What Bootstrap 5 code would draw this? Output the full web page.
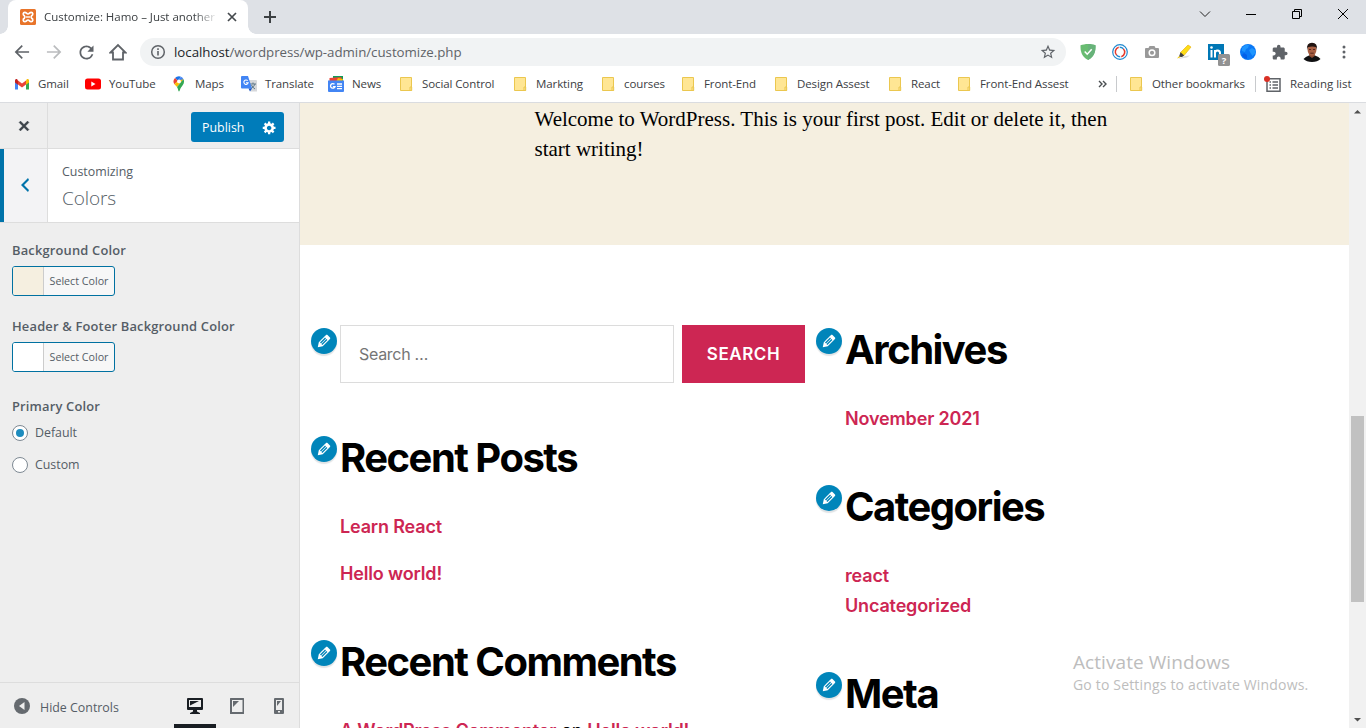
<!DOCTYPE html>
<html lang="en">
<head>
<meta charset="utf-8">
<title>Customize: Hamo – Just another WordPress site</title>
<link rel="stylesheet" href="https://cdn.jsdelivr.net/npm/bootstrap@5.3.0/dist/css/bootstrap.min.css">
<script src="https://cdn.jsdelivr.net/npm/bootstrap@5.3.0/dist/js/bootstrap.bundle.min.js"></script>
<style>
body{height:728px;font-family:"Open Sans",sans-serif;font-size:11.5px;line-height:16px;color:#3c4043;letter-spacing:-.1px}
svg{display:block;flex:none}
.tabstrip{height:34px;background:#dee1e6}
.tab{width:240px;height:34px;margin-left:8px;padding:0 10px 0 12px;border-radius:8px 8px 0 0;background:#fff}
.tab::before,.tab::after{content:"";position:absolute;bottom:0;width:8px;height:8px}
.tab::before{left:-8px;background:radial-gradient(circle at 0 0,#dee1e6 7.5px,#fff 8px)}
.tab::after{right:-8px;background:radial-gradient(circle at 100% 0,#dee1e6 7.5px,#fff 8px)}
.tabtitle{width:172px;margin-left:8px;letter-spacing:-.03px;-webkit-mask-image:linear-gradient(90deg,#000 150px,transparent 174px)}
.winbtn{width:46px;height:28px}
.toolbar{height:36px;padding:0 6px}
.cell{width:32px;height:28px;color:#5f6368}
.omni{height:28px;margin:0 6px;padding:0 10px;border-radius:14px;background:#f1f3f4;color:#5f6368;font-size:13.3px;letter-spacing:-.03px}
.bookmarks{height:33px;border-bottom:1px solid #dadce0;padding-left:14px;padding-bottom:4px}
.marks{display:grid;grid-template-columns:71px 86px 70px 87px 70px 114px 88px 80px 93px 114px 69px 134px}
.bm{display:flex;align-items:center;gap:8px}
.vr1{width:1px;height:16px;background:#c8cacd}
.side{width:300px;background:#eee;border-right:1px solid #ddd;color:#555d66;font-size:12.4px;letter-spacing:0}
.sidehead{height:46px;border-bottom:1px solid #ddd}
.sidecol{width:48px;border-right:1px solid #ddd}
.publish{width:93px;height:30px;margin:9px 15px 0 auto;padding:1px 7px 0 11px;background:#007cba;border-radius:3px;color:#fff}
.crumb{height:74px;background:#fff;border-bottom:1px solid #ddd}
.crumbtext{padding:15px 0 0 14px}
.backbtn{background:#f3f3f5;border-left:4px solid #0073aa;color:#0073aa}
.panelname{font-size:19px;line-height:26px;font-weight:300;margin-top:5px;letter-spacing:-.1px}
.ctl{font-weight:600;font-size:12.9px;line-height:20px;letter-spacing:.18px}
.controls{padding:17px 12px 0}
.swatch{width:103px;height:30px;margin:6px 0 20px;border:1px solid #0071a1;border-radius:3px;background:#f7f7f7;font-size:10.7px;overflow:hidden}
.chip{width:31px;border-right:1px solid #ccc}
.radio1{width:16px;height:16px;border:1px solid #7e8993;border-radius:50%;background:#fff;margin-right:7px}
.radio1.on::before{content:"";width:8px;height:8px;border-radius:50%;background:#1e8cbe}
.choice{height:16px;margin:9px 0 16px;letter-spacing:-.02px}
.sidefoot{height:46px;border-top:1px solid #ddd}
.device{width:42px;height:45px;color:#656a6f}
.device.on{border-bottom:4px solid #191e23;padding-top:4px;color:#191e23}
.site{font-family:Inter,sans-serif;background:#fff;color:#000;font-size:18px;line-height:30px;letter-spacing:-.16px}
.post{height:142px;background:#f5efe0;font-family:"Liberation Serif",serif;font-size:21px;line-height:30px;letter-spacing:0;padding:1px 0 0 234.5px}
.widgets{padding:80px 0 0 40px}
.wcol{width:465px;flex:none}
.wcol+.wcol{margin-left:40px;padding-top:1px}
.widget{position:relative;margin-bottom:49px}
.widget.finder{margin-bottom:51px}
.site h2{font-weight:700;font-size:40px;line-height:48px;letter-spacing:-1.52px;margin:0 0 30px}
.site a{color:#cd2653;font-weight:600;text-decoration:none}
.pen{position:absolute;left:-29px;top:2px;width:26px;height:26px;border-radius:50%;background:#0085ba;box-shadow:0 2px 1px rgba(46,68,83,.15);padding:4px}
.finder .pen{top:3px}
.field{width:334px;height:58px;border:1px solid #dcdcdc;padding-left:18px;color:#757575;font-size:16px;letter-spacing:-.3px}
.go{width:123px;height:58px;background:#cd2653;color:#fff;font-weight:600;font-size:17px;letter-spacing:.55px}
.gap17{margin-top:17px}
.scroll1{width:17px;background:#f1f1f1}
.thumb{position:absolute;left:2px;top:313px;width:13px;height:186px;background:#c1c1c1}
.activate{position:absolute;left:773px;top:547px;font-family:"Open Sans",sans-serif;color:#bdbdbd;font-size:14px;line-height:20px;letter-spacing:.17px}
.activate div{font-size:19px;line-height:25px;letter-spacing:.07px}
</style>
</head>
<body class="d-flex flex-column overflow-hidden">
<svg width="0" height="0" class="position-absolute">
 <symbol id="folder" viewBox="0 0 16 16"><path d="M2.500 1.500h11v13h-11z" fill="#ffe694" stroke="#ebc74f"/><path d="M12 14.500v-3.500h1.700v3.500z" fill="#ffe694" stroke="#ebc74f"/></symbol>
 <symbol id="pencil" viewBox="0 0 20 20"><path fill="#fff" d="M13.890 3.390l2.710 2.720c.46.46.42 1.240.03 1.640l-8.010 8.020-5.560 1.160 1.160-5.580s7.600-7.630 7.990-8.030c.39-.39 1.220-.39 1.680.07zm-2.730 2.790l-5.590 5.610 1.110 1.110 5.540-5.650zm-2.970 8.230l5.580-5.600-1.070-1.080-5.590 5.600z"/></symbol>
</svg>

<header class="flex-shrink-0">
 <div class="tabstrip d-flex">
  <div class="tab d-flex align-items-center position-relative">
   <svg width="16" height="16" viewBox="0 0 16 16"><rect width="16" height="16" rx="1.500" fill="#e8742a"/><path d="M4.800 3.300C3 3.300 2.600 6 4.300 6.700Q5.500 8 4.300 9.300C2.600 10 3 12.700 4.800 12.700 6.500 12.700 6.500 11 8 11s1.500 1.700 3.200 1.700c1.800 0 2.200-2.700.5-3.400Q10.500 8 11.700 6.700c1.700-.7 1.300-3.400-.5-3.400C9.500 3.300 9.500 5 8 5S6.500 3.300 4.800 3.300z" fill="none" stroke="#fff" stroke-width="1.700"/><path d="M6 8h4" stroke="#fff" stroke-width="1.400"/></svg>
   <span class="tabtitle text-nowrap">Customize: Hamo – Just another</span>
   <svg class="ms-auto" width="12" height="12" viewBox="0 0 12 12"><path d="M2 2l8 8M10 2l-8 8" stroke="#45494d" stroke-width="1.700"/></svg>
  </div>
  <svg class="align-self-center ms-3" width="12" height="12" viewBox="0 0 12 12"><path d="M6 0v12M0 6h12" stroke="#3c4043" stroke-width="2"/></svg>
  <div class="ms-auto d-flex text-black">
   <div class="winbtn d-flex align-items-center justify-content-center"><svg width="12" height="12" viewBox="0 0 12 12"><path d="M1 3.500l5 5 5-5" fill="none" stroke="#222"/></svg></div>
   <div class="winbtn d-flex align-items-center justify-content-center"><svg width="10" height="12" viewBox="0 0 10 12"><path d="M0 6.500h10" stroke="#000"/></svg></div>
   <div class="winbtn d-flex align-items-center justify-content-center"><svg width="10" height="10" viewBox="0 0 10 10"><path d="M.5 2.500h7v7h-7zM2.500 2.500v-2h7v7h-2" fill="none" stroke="#000"/></svg></div>
   <div class="winbtn d-flex align-items-center justify-content-center"><svg width="10" height="10" viewBox="0 0 10 10"><path d="M0 0l10 10M10 0L0 10" stroke="#000"/></svg></div>
  </div>
 </div>

 <div class="toolbar d-flex align-items-center">
  <div class="cell d-flex align-items-center justify-content-center"><svg width="20" height="20" viewBox="0 0 24 24" fill="currentColor"><path d="M20.500 11H7l6-6-1.400-1.400L3.200 12l8.400 8.400L13 19l-6-6h13.500z"/></svg></div>
  <div class="cell d-flex align-items-center justify-content-center"><svg width="20" height="20" viewBox="0 0 24 24" fill="#babcbe"><path d="M3.500 11H17l-6-6 1.400-1.400 8.400 8.400-8.400 8.400L11 19l6-6H3.500z"/></svg></div>
  <div class="cell d-flex align-items-center justify-content-center"><svg width="21" height="21" viewBox="0 0 24 24" fill="currentColor"><path d="M17.650 6.350A7.958 7.958 0 0 0 12 4c-4.420 0-7.990 3.580-7.990 8s3.570 8 7.990 8c3.730 0 6.840-2.550 7.730-6h-2.080A5.990 5.990 0 0 1 12 18c-3.310 0-6-2.690-6-6s2.690-6 6-6c1.660 0 3.140.69 4.220 1.780L13 11h7V4z"/></svg></div>
  <div class="cell d-flex align-items-center justify-content-center"><svg width="18" height="18" viewBox="0 0 18 18"><path d="M1.500 9.500L9 2l7.500 7.500H14v7H4v-7z" fill="none" stroke="currentColor" stroke-width="1.800"/></svg></div>
  <div class="omni d-flex align-items-center flex-grow-1">
   <svg width="16" height="16" viewBox="0 0 16 16"><circle cx="8" cy="8" r="6.300" fill="none" stroke="#5f6368" stroke-width="1.500"/><path d="M8 7v4.500M8 4.300v1.700" stroke="#5f6368" stroke-width="1.600"/></svg>
   <span class="ms-2"><span class="text-dark">localhost</span>/wordpress/wp-admin/customize.php</span>
   <svg class="ms-auto" width="16" height="16" viewBox="1 1 22 22" fill="#5f6368"><path d="M22 9.240l-7.190-.62L12 2 9.190 8.630 2 9.240l5.460 4.730L5.820 21 12 17.270 18.180 21l-1.630-7.030L22 9.240zM12 15.400l-3.760 2.270 1-4.280-3.320-2.880 4.380-.38L12 6.100l1.710 4.040 4.380.38-3.320 2.880 1 4.280L12 15.400z"/></svg>
  </div>
  <div class="cell d-flex align-items-center justify-content-center"><svg width="16" height="16" viewBox="0 0 16 16"><path d="M8 0c2.700 0 5.400.6 7.500 1.300 0 5-.2 11-7.500 14.700C.7 12.300.5 6.300.5 1.300 2.600.6 5.300 0 8 0z" fill="#68bc71"/><path d="M8 0c2.700 0 5.400.6 7.500 1.300 0 5-.2 11-7.500 14.700z" fill="#67b279"/><path d="M4.700 7.500l2.500 2.700 4.500-5" fill="none" stroke="#fff" stroke-width="1.500"/></svg></div>
  <div class="cell d-flex align-items-center justify-content-center"><svg width="16" height="16" viewBox="0 0 16 16"><circle cx="8" cy="8" r="7.300" fill="#fff" stroke="#2289cf" stroke-width="1.200"/><path d="M6.700 3.300a4.800 4.800 0 0 0-2 8" fill="none" stroke="#e5392b" stroke-width="1.500"/><path d="M9.300 12.700a4.800 4.800 0 0 0 2-8" fill="none" stroke="#e5392b" stroke-width="1.500"/><path d="M7.700 3.200a4.800 4.800 0 0 1 3.600 1.500M8.200 12.800a4.800 4.800 0 0 1-3.500-1.500" fill="none" stroke="#2289cf" stroke-width="1.500"/></svg></div>
  <div class="cell d-flex align-items-center justify-content-center"><svg width="16" height="16" viewBox="0 0 16 16"><path d="M2 4h2.500L5.500 2h5l1 2H14q1 0 1 1v8q0 1-1 1H2q-1 0-1-1V5q0-1 1-1z" fill="#999"/><circle cx="8" cy="8.800" r="2.800" fill="none" stroke="#fff" stroke-width="1.500"/></svg></div>
  <div class="cell d-flex align-items-center justify-content-center"><svg width="16" height="16" viewBox="0 0 16 16"><path d="M2 15l9-1.500 3-2-5 .5-5 2z" fill="#ddd"/><path d="M12 1l3 2-7 8.500-3.500-3z" fill="#fddd16" stroke="#ebb517" stroke-width=".7"/><path d="M4.500 8.200l3.700 3.200L6 13l-3-.3z" fill="#42413d"/><path d="M3 12.300l1.500 1L1 14.600z" fill="#f5c800"/></svg></div>
  <div class="cell position-relative"><svg class="position-absolute" style="left:8px;top:6px" width="22" height="22" viewBox="0 0 22 22"><rect width="16" height="16" fill="#0077b5"/><path d="M3.500 6v7.500M7 6v7.500M7 9q0-2.500 2.500-2.500t2.500 2.500v4" fill="none" stroke="#fff" stroke-width="2"/><circle cx="3.500" cy="3.500" r="1.300" fill="#fff"/><rect x="10" y="10" width="12" height="12" rx="1.500" fill="#929292"/><text x="16" y="19.500" text-anchor="middle" font-family="Open Sans" font-size="9.500" font-weight="700" fill="#fff">?</text></svg></div>
  <div class="cell d-flex align-items-center justify-content-center"><svg width="16" height="16" viewBox="0 0 16 16"><circle cx="8" cy="8" r="8" fill="#0a78f5"/><path d="M2 4q3-4 7-3l-1 3-2 1-1 3-3-1zM9 6l3-2 3 2 .500 3-3 3-2-3z" fill="#1f96ff"/><path d="M4 9l3 2v4q-4-1-5-4z" fill="#0560e8"/></svg></div>
  <div class="cell d-flex align-items-center justify-content-center"><svg width="17" height="17" viewBox="1 0 24 24" fill="currentColor"><path d="M20.500 11H19V7c0-1.100-.9-2-2-2h-4V3.500a2.500 2.500 0 0 0-5 0V5H4c-1.100 0-1.990.9-1.990 2v3.800H3.500c1.490 0 2.700 1.210 2.700 2.700s-1.210 2.700-2.700 2.700H2V20c0 1.100.9 2 2 2h3.800v-1.500c0-1.490 1.210-2.700 2.700-2.700s2.700 1.210 2.700 2.700V22H17c1.100 0 2-.9 2-2v-4h1.500a2.500 2.500 0 0 0 0-5z"/></svg></div>
  <div class="cell d-flex align-items-center justify-content-center"><svg width="20" height="20" viewBox="0 0 20 20"><path d="M1.500 17q2-2.500 5.500-3.500h6q4 1 5.500 3.500-3 3-8.500 3t-8.500-3z" fill="#101012"/><path d="M7.200 11h5.600v3l-2.800 2-2.800-2z" fill="#8d4c33"/><ellipse cx="10" cy="7.800" rx="4.400" ry="6" fill="#a86044"/><path d="M5 8Q4.300.800 10 .8T15 8l-.8-2.700q-4-1.700-8.400 0z" fill="#201411"/><path d="M7 7.500h2M11 7.500h2M8.300 11.200h3.400" stroke="#56261c"/></svg></div>
  <div class="cell d-flex align-items-center justify-content-center"><svg width="4" height="14" viewBox="0 0 4 14" fill="currentColor"><circle cx="2" cy="2" r="1.500"/><circle cx="2" cy="7" r="1.500"/><circle cx="2" cy="12" r="1.500"/></svg></div>
 </div>

 <nav class="bookmarks d-flex align-items-center text-nowrap">
  <div class="marks">
   <div class="bm"><svg width="16" height="16" viewBox="0 0 16 16"><path d="M1 3.500v10h3V7z" fill="#4285f4"/><path d="M15 3.500v10h-3V7z" fill="#34a853"/><path d="M4 4.500v4l4 3 4-3v-4l-4 3z" fill="#ea4335"/><path d="M1 4.500v2l3 2.200V4.500L3 3Q1 2.500 1 4.500z" fill="#c5221f"/><path d="M15 4.500v2l-3 2.200V4.500l1-1.500q2-.5 2 1.500z" fill="#fbbc04"/></svg>Gmail</div>
   <div class="bm"><svg width="16" height="16" viewBox="0 0 16 16"><rect y="2.500" width="16" height="11" rx="2.500" fill="#f00"/><path d="M6.300 5.600v4.800l4.200-2.400z" fill="#fff"/></svg>YouTube</div>
   <div class="bm"><svg width="16" height="16" viewBox="0 0 16 16"><path d="M8 .3a5.200 5.200 0 0 0-4 1.800l3 2.600L10 .8A5 5 0 0 0 8 .3z" fill="#1a73e8"/><path d="M4 2.100a5 5 0 0 0-.6 6.200L7 4.700z" fill="#ea4335"/><path d="M10 .8L6.300 5 9 7.500l3.500-4.200A5 5 0 0 0 10 .8z" fill="#4285f4"/><path d="M12.500 3.300L6 11Q4.500 9.500 3.400 8.300L7 4.500z" fill="#fbbc04"/><path d="M12.500 3.300q1.500 3-1 6.200Q9.300 12 8.700 14.500 8 16.500 7.300 14.500 7 12.500 6 11z" fill="#34a853"/><circle cx="8" cy="5.400" r="1.900" fill="#fff"/></svg>Maps</div>
   <div class="bm"><svg width="16" height="16" viewBox="0 0 16 16"><path d="M7 4h8q1 0 1 1v10.500H9.500z" fill="#d6d8db"/><path d="M9 8h6M12 6.500V8M14 8q-1 3-4 4.500M10.500 9q1 2.500 3.500 4" stroke="#607988" fill="none"/><path d="M1 0h6l4 12.500H1q-1 0-1-1V1q0-1 1-1z" fill="#4285f4"/><path d="M7.500 12.500H11l-2 3z" fill="#1a56c4"/><path d="M6.700 4.700A2.200 2.200 0 1 0 7.200 6.700H5" fill="none" stroke="#fff" stroke-width="1.100"/></svg>Translate</div>
   <div class="bm"><svg width="16" height="16" viewBox="0 0 16 16"><path d="M5 0h10v5H5z" fill="#0c9d58"/><path d="M1.500 2l12-1v5h-12z" fill="#ea4335"/><path d="M10 2l5 1-1 4-6-1z" fill="#fbbc04"/><path d="M0 4.500h16V15q0 1-1 1H1q-1 0-1-1z" fill="#4285f4"/><path d="M6.500 8.300A2.300 2.300 0 1 0 7 10.700H4.900M9 8h5M9 10.300h5M9 12.600h5" fill="none" stroke="#fff" stroke-width="1.300"/></svg>News</div>
   <div class="bm"><svg width="16" height="16"><use href="#folder"/></svg>Social Control</div>
   <div class="bm"><svg width="16" height="16"><use href="#folder"/></svg>Markting</div>
   <div class="bm"><svg width="16" height="16"><use href="#folder"/></svg>courses</div>
   <div class="bm"><svg width="16" height="16"><use href="#folder"/></svg>Front-End</div>
   <div class="bm"><svg width="16" height="16"><use href="#folder"/></svg>Design Assest</div>
   <div class="bm"><svg width="16" height="16"><use href="#folder"/></svg>React</div>
   <div class="bm"><svg width="16" height="16"><use href="#folder"/></svg>Front-End Assest</div>
  </div>
  <svg class="ms-2" width="10" height="8" viewBox="0 0 10 8"><path d="M1 1l3 3-3 3M5 1l3 3-3 3" fill="none" stroke="#4a4e51" stroke-width="1.400"/></svg>
  <span class="vr1 ms-2 me-2"></span>
  <div class="bm" style="width:130px"><svg style="margin-left:3px" width="16" height="16"><use href="#folder"/></svg>Other bookmarks</div>
  <span class="vr1"></span>
  <div class="bm ms-2" style="letter-spacing:0"><svg width="18" height="16" viewBox="0 0 18 16"><path d="M3 2.800h13v12.500H3z" fill="none" stroke="#5f6368" stroke-width="1.500"/><path d="M5.500 6h1.500M8.500 6h5.500M5.500 9h1.500M8.500 9h5.500M5.500 12h1.500M8.500 12h5.500" stroke="#5f6368" stroke-width="1.400"/><circle cx="3" cy="3" r="3" fill="#d93025"/></svg>Reading list</div>
 </nav>
</header>

<main class="d-flex flex-grow-1 overflow-hidden">
 <aside class="side d-flex flex-column flex-shrink-0">
  <div class="sidehead d-flex flex-shrink-0">
   <div class="sidecol d-flex align-items-center justify-content-center"><svg width="20" height="20" viewBox="0 0 20 20"><path fill="#3c434a" stroke="#3c434a" stroke-width=".4" d="M14.950 6.460L11.410 10l3.540 3.540-1.410 1.410L10 11.420l-3.530 3.530-1.420-1.420L8.580 10 5.050 6.470l1.420-1.420L10 8.580l3.540-3.530z"/></svg></div>
   <div class="publish d-flex align-items-center">
    <span>Publish</span>
    <svg class="ms-auto" width="15" height="15" viewBox="0 0 20 20"><path fill="#fff" d="M18 12h-2.180c-.17.7-.44 1.350-.81 1.930l1.540 1.540-2.100 2.100-1.540-1.540c-.58.36-1.230.63-1.910.79V19H8v-2.180c-.68-.16-1.330-.43-1.910-.79l-1.540 1.540-2.120-2.120 1.540-1.540c-.36-.58-.63-1.230-.79-1.910H1V9.030h2.170c.16-.7.44-1.350.8-1.940L2.430 5.550l2.100-2.100 1.540 1.540c.58-.37 1.240-.64 1.930-.81V2h3v2.180c.68.16 1.330.43 1.910.79l1.540-1.540 2.120 2.120-1.540 1.540c.36.59.64 1.240.8 1.940H18V12zm-8.500 1.500c1.660 0 3-1.340 3-3s-1.340-3-3-3-3 1.340-3 3 1.340 3 3 3z"/></svg>
   </div>
  </div>
  <div class="crumb d-flex flex-shrink-0">
   <div class="sidecol backbtn d-flex align-items-center justify-content-center pe-1"><svg width="20" height="20" viewBox="-1 1 20 20" fill="currentColor"><path d="M14 5l-5 5 5 5-1 2-7-7 7-7z"/></svg></div>
   <div class="crumbtext"><div>Customizing</div><div class="panelname">Colors</div></div>
  </div>
  <div class="flex-grow-1 controls">
   <div class="ctl">Background Color</div>
   <div class="swatch d-flex align-items-stretch"><span class="chip" style="background:#f5efe0"></span><span class="m-auto">Select Color</span></div>
   <div class="ctl">Header &amp; Footer Background Color</div>
   <div class="swatch d-flex align-items-stretch mb-4"><span class="chip bg-white"></span><span class="m-auto">Select Color</span></div>
   <div class="ctl">Primary Color</div>
   <div class="choice d-flex align-items-center"><span class="radio1 on d-flex align-items-center justify-content-center"></span>Default</div>
   <div class="choice d-flex align-items-center"><span class="radio1"></span>Custom</div>
  </div>
  <div class="sidefoot d-flex flex-shrink-0 align-items-center">
   <svg class="ms-2 ps-1" width="24" height="18" viewBox="0 0 18 18"><circle cx="9" cy="9" r="8" fill="#656a6f"/><path d="M11.500 5v8L6 9z" fill="#eee"/></svg>
   <span class="ms-2 pt-1">Hide Controls</span>
   <div class="ms-auto d-flex" style="margin-right:-1px">
    <div class="device on d-flex align-items-center justify-content-center"><svg width="16" height="16" viewBox="0 0 16 16" fill="currentColor"><path fill-rule="evenodd" d="M1 0h14q1 0 1 1v10q0 1-1 1h-5v1.500l3 1.500v1H3v-1l3-1.500V12H1q-1 0-1-1V1q0-1 1-1zm1 2v7h12V2z"/><path d="M3 3h9L3 7.500z"/></svg></div>
    <div class="device d-flex align-items-center justify-content-center"><svg width="16" height="16" viewBox="0 0 16 16" fill="currentColor"><path fill-rule="evenodd" d="M1.500 0h13q.5 0 .5.500v15q0 .5-.5.500h-13q-.5 0-.5-.5V.5q0-.5.5-.5zM3 2v12h10.500V2z"/><path d="M4 3h6L4 9z"/></svg></div>
    <div class="device d-flex align-items-center justify-content-center"><svg width="10" height="16" viewBox="0 0 10 16" fill="currentColor"><path fill-rule="evenodd" d="M1 0h8q1 0 1 1v14q0 1-1 1H1q-1 0-1-1V1q0-1 1-1zm1 2v10h6V2zM4 13v1.500h2V13z"/><path d="M3 3h4L3 8z"/></svg></div>
   </div>
  </div>
 </aside>

 <section class="site flex-grow-1 position-relative overflow-hidden">
  <div class="post">Welcome to WordPress. This is your first post. Edit or delete it, then<br>start writing!</div>
  <div class="widgets d-flex">
   <div class="wcol">
    <div class="widget finder d-flex gap-2">
     <span class="pen"><svg width="18" height="18"><use href="#pencil"/></svg></span>
     <div class="field d-flex align-items-center">Search …</div>
     <div class="go d-flex align-items-center justify-content-center">SEARCH</div>
    </div>
    <div class="widget"><span class="pen"><svg width="18" height="18"><use href="#pencil"/></svg></span>
     <h2>Recent Posts</h2>
     <a class="d-block" href="#">Learn React</a>
     <a class="d-block gap17" href="#">Hello world!</a>
    </div>
    <div class="widget"><span class="pen"><svg width="18" height="18"><use href="#pencil"/></svg></span>
     <h2>Recent Comments</h2>
     <div class="text-nowrap"><a href="#">A WordPress Commenter</a> on <a href="#">Hello world!</a></div>
    </div>
   </div>
   <div class="wcol">
    <div class="widget"><span class="pen"><svg width="18" height="18"><use href="#pencil"/></svg></span>
     <h2>Archives</h2>
     <a class="d-block" href="#">November 2021</a>
    </div>
    <div class="widget"><span class="pen"><svg width="18" height="18"><use href="#pencil"/></svg></span>
     <h2>Categories</h2>
     <a class="d-block" href="#">react</a>
     <a class="d-block" href="#">Uncategorized</a>
    </div>
    <div class="widget"><span class="pen"><svg width="18" height="18"><use href="#pencil"/></svg></span>
     <h2>Meta</h2>
    </div>
   </div>
  </div>
  <div class="activate"><div>Activate Windows</div>Go to Settings to activate Windows.</div>
 </section>
 <div class="scroll1 position-relative flex-shrink-0 d-flex flex-column align-items-center justify-content-between py-1">
  <svg width="9" height="9" viewBox="0 0 9 9"><path d="M1 6.500h7L4.500 3z" fill="#505050"/></svg>
  <span class="thumb"></span>
  <svg width="9" height="9" viewBox="0 0 9 9"><path d="M1 3h7L4.500 6.500z" fill="#505050"/></svg>
 </div>
</main>
</body>
</html>
